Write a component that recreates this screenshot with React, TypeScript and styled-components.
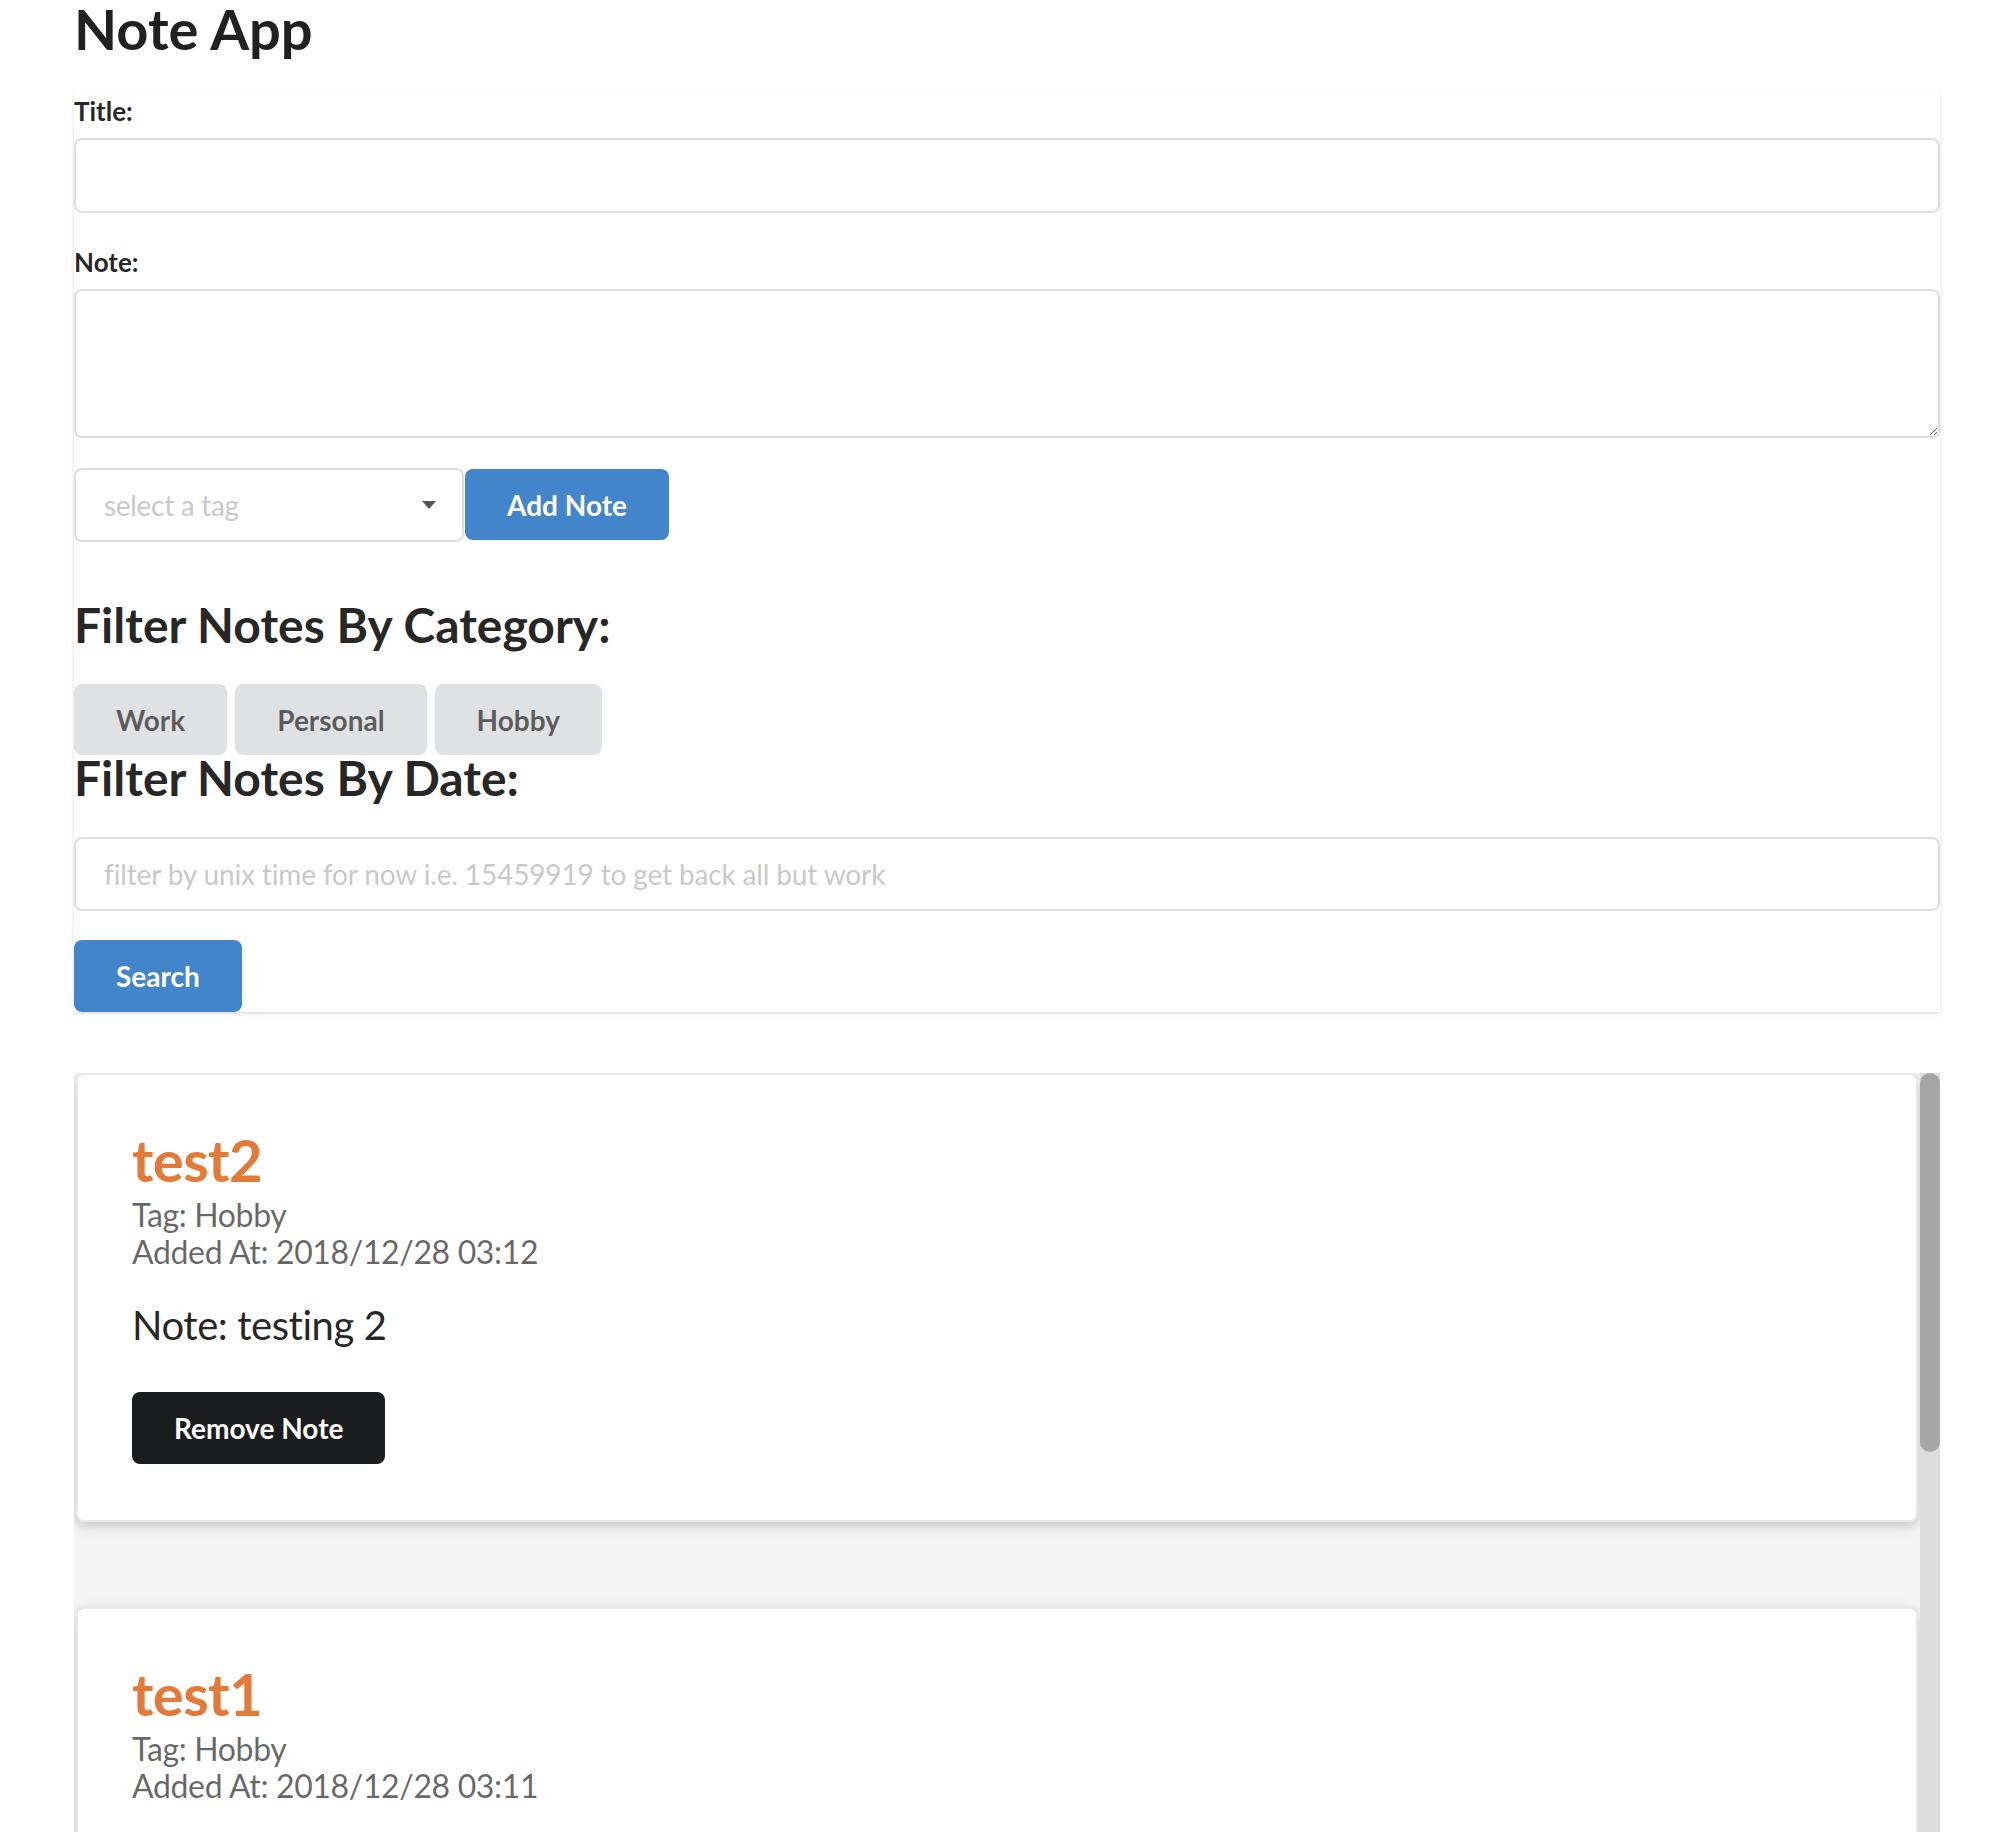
import React from 'react';
import styled, { createGlobalStyle } from 'styled-components';

const colors = {
  text: 'rgba(0, 0, 0, 0.87)',
  muted: 'rgba(0, 0, 0, 0.6)',
  border: 'rgba(34, 36, 38, 0.15)',
  placeholder: 'rgba(191, 191, 191, 0.87)',
  blue: '#4285ca',
  orange: '#e27a3a',
  black: '#1b1c1d',
  grey: '#e0e1e2',
};

const GlobalStyle = createGlobalStyle`
  html, body {
    margin: 0;
    padding: 0;
    background: #fff;
    font-family: Lato, "Open Sans", "Liberation Sans", sans-serif;
    font-size: 28px;
    color: ${colors.text};
  }
  * {
    box-sizing: border-box;
  }
`;

const Page = styled.div`
  padding: 1px 74px 0;
`;

const AppTitle = styled.h1`
  margin: 0 0 35px;
  font-size: 56px;
  line-height: 56px;
  font-weight: 700;
`;

const FormBox = styled.div`
  background: #fff;
  box-shadow: 0 2px 4px 0 rgba(34, 36, 38, 0.15);
`;

const Field = styled.div`
  margin-bottom: 30px;
`;

const Label = styled.label`
  display: block;
  font-size: 26px;
  font-weight: 700;
  line-height: 38px;
  margin-bottom: 8px;
`;

const TextInput = styled.input<{ $height?: number }>`
  display: block;
  width: 100%;
  height: ${(p) => p.$height ?? 75}px;
  padding: 0 28px;
  border: 2px solid ${colors.border};
  border-radius: 8px;
  font-family: inherit;
  font-size: 28px;
  letter-spacing: -0.005em;
  color: ${colors.text};
  outline: none;
  &::placeholder {
    color: ${colors.placeholder};
  }
`;

const TextArea = styled.textarea`
  display: block;
  width: 100%;
  height: 149px;
  padding: 20px 28px;
  border: 2px solid ${colors.border};
  border-radius: 8px;
  font-family: inherit;
  font-size: 28px;
  outline: none;
  resize: vertical;
`;

const ActionRow = styled.div`
  display: flex;
  align-items: flex-start;
  gap: 1px;
`;

const Dropdown = styled.div`
  width: 390px;
  height: 74px;
  display: flex;
  align-items: center;
  justify-content: space-between;
  padding: 0 26px 0 28px;
  border: 2px solid ${colors.border};
  border-radius: 8px;
  font-size: 28px;
  letter-spacing: -0.011em;
  color: ${colors.placeholder};
  cursor: pointer;
`;

const Button = styled.button<{ $variant: 'blue' | 'black' | 'grey' }>`
  height: 72px;
  padding: 0 42px;
  border: none;
  border-radius: 8px;
  font-family: inherit;
  font-size: 28px;
  font-weight: 700;
  line-height: 1;
  cursor: pointer;
  background: ${(p) =>
    p.$variant === 'blue' ? colors.blue : p.$variant === 'black' ? colors.black : colors.grey};
  color: ${(p) => (p.$variant === 'grey' ? colors.muted : '#fff')};
`;

const AddButton = styled(Button)`
  height: 71px;
  margin-top: 1px;
`;

const SectionHeading = styled.h2<{ $top: number }>`
  margin: ${(p) => p.$top}px 0 28px;
  font-size: 48px;
  line-height: 62px;
  font-weight: 700;
`;

const TagButtons = styled.div`
  display: flex;
  gap: 8px;
  margin-top: 1px;
`;

const TagButton = styled(Button)`
  height: 71px;
  padding: 0 42px;
`;

const SearchRow = styled.div`
  margin-top: 29px;
`;

const ListFrame = styled.div`
  display: flex;
  margin-top: 61px;
  height: 759px;
  background: #f4f4f4;
`;

const NoteList = styled.div`
  flex: 1;
  min-width: 0;
  overflow: hidden;
`;

const ScrollTrack = styled.div`
  width: 20px;
  flex-shrink: 0;
  background: #dcdcdc;
`;

const ScrollThumb = styled.div`
  height: 379px;
  border-radius: 10px;
  background: #a6a6a6;
`;

const NoteCard = styled.div`
  margin: 0 2px 85px;
  padding: 56px 54px;
  background: #fff;
  border: 2px solid rgba(34, 36, 38, 0.1);
  border-radius: 8px;
  box-shadow: 0 4px 8px 0 rgba(34, 36, 38, 0.12), 0 4px 16px 0 rgba(34, 36, 38, 0.1);
  &:last-child {
    margin-bottom: 0;
  }
`;

const NoteTitle = styled.div`
  font-size: 58px;
  line-height: 58px;
  font-weight: 700;
  letter-spacing: -0.01em;
  color: ${colors.orange};
`;

const Meta = styled.div`
  margin-top: 7px;
  font-size: 32px;
  line-height: 37px;
  letter-spacing: -0.011em;
  color: ${colors.muted};
`;

const NoteBody = styled.div`
  margin-top: 31px;
  font-size: 40px;
  line-height: 48px;
  letter-spacing: -0.011em;
  color: ${colors.text};
`;

const RemoveRow = styled.div`
  margin-top: 43px;
`;

const notes = [
  { title: 'test2', tag: 'Hobby', added: '2018/12/28 03:12', body: 'testing 2' },
  { title: 'test1', tag: 'Hobby', added: '2018/12/28 03:11', body: 'testing 1' },
  { title: 'test', tag: 'Work', added: '2018/12/28 03:10', body: 'testing' },
];

const App = () => {
  return (
    <Page>
      <GlobalStyle />
      <AppTitle>Note App</AppTitle>

      <FormBox>
        <Field>
          <Label>Title:</Label>
          <TextInput />
        </Field>
        <Field>
          <Label>Note:</Label>
          <TextArea />
        </Field>

        <ActionRow>
          <Dropdown>
            <span>select a tag</span>
            <svg width="14" height="8" viewBox="0 0 14 8">
              <path d="M0 0 L14 0 L7 8 Z" fill="#555" />
            </svg>
          </Dropdown>
          <AddButton $variant="blue">Add Note</AddButton>
        </ActionRow>

        <SectionHeading $top={52}>Filter Notes By Category:</SectionHeading>
        <TagButtons>
          <TagButton $variant="grey">Work</TagButton>
          <TagButton $variant="grey">Personal</TagButton>
          <TagButton $variant="grey">Hobby</TagButton>
        </TagButtons>

        <SectionHeading $top={-8}>Filter Notes By Date:</SectionHeading>
        <TextInput
          $height={74}
          placeholder="filter by unix time for now i.e. 15459919 to get back all but work"
        />
        <SearchRow>
          <Button $variant="blue">Search</Button>
        </SearchRow>
      </FormBox>

      <ListFrame>
        <NoteList>
          {notes.map((n) => (
            <NoteCard key={n.title}>
              <NoteTitle>{n.title}</NoteTitle>
              <Meta>
                Tag: {n.tag}
                <br />
                Added At: {n.added}
              </Meta>
              <NoteBody>Note: {n.body}</NoteBody>
              <RemoveRow>
                <Button $variant="black">Remove Note</Button>
              </RemoveRow>
            </NoteCard>
          ))}
        </NoteList>
        <ScrollTrack>
          <ScrollThumb />
        </ScrollTrack>
      </ListFrame>
    </Page>
  );
};

export default App;
